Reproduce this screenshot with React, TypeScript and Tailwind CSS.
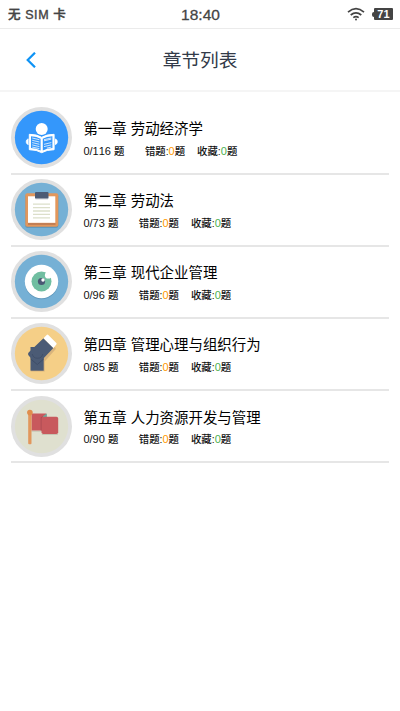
import React from "react";

function BookIcon() {
  return (
    <svg viewBox="0 0 61 61" className="block h-full w-full">
      <circle cx="30.5" cy="30.5" r="30.5" fill="#e0e0e0" />
      <circle cx="30.5" cy="30.5" r="26.700" fill="#3497fb" />
      <circle cx="30.7" cy="22" r="6" fill="#fff" />
      <path d="M17.500 32c-3 0-3 5.500 0 5.500M44 32c3 0 3 5.500 0 5.500" fill="#fff" stroke="#fff" strokeWidth=".8" />
      <path d="M18.300 27.300q7.500 0 12.400 3 4.900-3 12.400-3v15.400q-7.500 0-12.400 3-4.900-3-12.400-3z" fill="#fff" stroke="#fff" strokeWidth="1" />
      <path d="M20 29.200q6 .2 9.600 2.600v11.600q-4-2-9.600-2.300zM41.400 29.200q-6 .2-9.600 2.600v11.600q4-2 9.600-2.300z" fill="#3497fb" />
      <path d="M21.200 31l7.200 1.700M21.200 33.300l7.200 1.700M21.200 35.600l7.200 1.700M21.200 37.900l7.200 1.700M21.200 40.100l7.200 1.500M40.300 31l-7.300 1.700M40.300 32.100l-7.300 1.700M40.300 35.600l-7.300 1.700M40.300 37.900l-7.300 1.700M40.300 40.100l-4.500 1" stroke="#fff" strokeOpacity=".85" strokeWidth=".9" />
    </svg>
  );
}

function ClipboardIcon() {
  return (
    <svg viewBox="0 0 61 61" className="block h-full w-full">
      <circle cx="30.5" cy="30.5" r="30.5" fill="#e0e0e0" />
      <circle cx="30.5" cy="30.5" r="26.700" fill="#75b0d5" />
      <rect x="14.300" y="15.300" width="33" height="33.500" rx="2" fill="#5a92b5" />
      <rect x="14.300" y="14.300" width="33" height="33.500" rx="2" fill="#e2975c" />
      <path d="M17 45h27.500" stroke="#af7150" strokeWidth="1.200" />
      <rect x="17" y="17.300" width="27.300" height="26.500" fill="#fff" />
      <rect x="24" y="13" width="13.500" height="6.800" rx="1" fill="#4c5b75" />
      <path d="M24.500 20h12.500" stroke="#c9ccd2" strokeWidth=".8" />
      <path d="M22 25.200h17M22 28.600h17M22 32h17M22 35.400h17M22 38.800h17" stroke="#dcdfca" strokeWidth="1.300" />
    </svg>
  );
}

function EyeIcon() {
  return (
    <svg viewBox="0 0 61 61" className="block h-full w-full">
      <circle cx="30.5" cy="30.5" r="30.5" fill="#e0e0e0" />
      <circle cx="30.5" cy="30.5" r="26.700" fill="#75b0d5" />
      <circle cx="30.500" cy="31.500" r="16.700" fill="#5f98bc" />
      <circle cx="30.500" cy="30.500" r="16.700" fill="#fff" />
      <circle cx="30.500" cy="30.500" r="10" fill="#70bea1" />
      <circle cx="37.300" cy="24.200" r="3.400" fill="#fff" />
      <circle cx="30.500" cy="30.500" r="3.600" fill="#4a5874" />
      <circle cx="32" cy="29" r="1.700" fill="#fff" />
    </svg>
  );
}

function SwitchIcon() {
  return (
    <svg viewBox="0 0 61 61" className="block h-full w-full">
      <circle cx="30.5" cy="30.5" r="30.5" fill="#e0e0e0" />
      <circle cx="30.5" cy="30.5" r="26.700" fill="#f5cf87" />
      <path d="M33 33l11-9 .8 2L33.700 38.500v10H19.500z" fill="#d9b47c" />
      <path d="M19.500 24h13.200v23.700H19.500z" fill="#4b5b75" />
      <path d="M17.600 29.600L32.500 15.200l9.900 9.800L29.500 38.500q-3.500 2.500-7-.5l-4.900-5.600q-1.200-1.400 0-2.800z" fill="#4b5b75" />
      <path d="M32.500 15.200l3.200-3.200q.8-.8 1.600 0l8 8q.8.800 0 1.600L42.400 25z" fill="#fff" />
      <path d="M19.700 36l6.600 5.500 6.400-5.500" fill="none" stroke="#3f4e68" strokeWidth="1" />
      <path d="M21.300 31a5.300 5.300 0 0 0 10.400 0" fill="none" stroke="#41506a" strokeWidth="1" />
    </svg>
  );
}

function FlagIcon() {
  return (
    <svg viewBox="0 0 61 61" className="block h-full w-full">
      <circle cx="30.5" cy="30.5" r="30.5" fill="#e0e0e0" />
      <circle cx="30.5" cy="30.5" r="26.700" fill="#dfe0cf" />
      <path d="M20.500 35.200H31M30.800 38.500h16" stroke="#c5c5b3" strokeWidth="1" />
      <path d="M20.500 17.500h14.800v17H20.500z" fill="#c8595d" />
      <path d="M31 21l4.800-3.600V21z" fill="#68ac9e" />
      <path d="M29.700 21.500l2.200-1.500v14.500h-2.200z" fill="#a94b53" />
      <rect x="30.500" y="20.800" width="16.700" height="17.200" rx="1.800" fill="#c8595d" />
      <rect x="17.200" y="17" width="3.300" height="31.200" rx="1" fill="#e2975c" />
      <circle cx="18.900" cy="16.600" r="2.800" fill="#e08d4c" />
    </svg>
  );
}

const chapters = [
  { title: "第一章 劳动经济学", total: 116, Icon: BookIcon },
  { title: "第二章 劳动法", total: 73, Icon: ClipboardIcon },
  { title: "第三章 现代企业管理", total: 96, Icon: EyeIcon },
  { title: "第四章 管理心理与组织行为", total: 85, Icon: SwitchIcon },
  { title: "第五章 人力资源开发与管理", total: 90, Icon: FlagIcon },
];

function StatusBar() {
  return (
    <div className="grid h-[29px] grid-cols-3 items-center border-b border-[#ebebeb] pr-[7px] pl-2 text-[#444]">
      <span className="pt-[2px] text-[12.5px] font-medium leading-none tracking-[0.6px] [-webkit-text-stroke:0.4px_#444]">无 SIM 卡</span>
      <span className="pt-[2px] text-center text-[15.5px] leading-none [-webkit-text-stroke:0.3px_#444]">18:40</span>
      <div className="flex items-center justify-end gap-[7px]">
        <svg width="18" height="14" viewBox="0 0 18 14" fill="none" stroke="#444" strokeWidth="1.700">
          <path d="M1 5.100q8-6.800 16 0M3.700 8q5.300-4.400 10.600 0M6.300 10.600q2.700-2 5.400 0" />
          <circle cx="9" cy="12.500" r="1" fill="#444" stroke="none" />
        </svg>
        <div className="flex items-center">
          <span className="h-[5px] w-[2px] rounded-l-sm bg-[#444]" />
          <span className="flex h-3 w-[19px] items-center justify-center rounded-[1px] bg-[#444] text-[11px] font-bold leading-none text-white">71</span>
        </div>
      </div>
    </div>
  );
}

export default function App() {
  return (
    <div className="h-[711px] w-full overflow-hidden bg-white font-['Liberation_Sans','Noto_Sans_CJK_SC',sans-serif]">
      <StatusBar />
      <header className="grid h-[63px] grid-cols-[1fr_auto_1fr] items-center border-b-2 border-[#f5f5f5]">
        <button className="pl-[26px]" aria-label="返回">
          <svg width="10" height="16" viewBox="0 0 10 16" fill="none" stroke="#0e93f5" strokeWidth="2.200">
            <path d="M9 .700L1.700 8 9 15.300" />
          </svg>
        </button>
        <h1 className="pt-[3px] text-[18.7px] leading-none text-[#323a48]">章节列表</h1>
        <span />
      </header>
      <ul className="mx-[11px] pt-[11px]">
        {chapters.map(({ title, total, Icon }) => (
          <li key={title} className="flex h-[72.1px] items-start border-b-2 border-[#e6e6e6] pt-[4.2px]">
            <div className="h-[61px] w-[61px] shrink-0">
              <Icon />
            </div>
            <div className="ml-[11.4px] pt-[13px] whitespace-nowrap text-black">
              <h2 className="text-[14.45px] leading-[18px]">{title}</h2>
              <p className="mt-[5.500px] flex text-[10.4px] leading-[14px] text-[#111] [font-kerning:none]">
                <span className="mr-[20.5px]"><span className="text-[11px]">0/{total} </span><b className="font-medium">题</b></span>
                <span className="mr-3 font-medium">错题:<i className="text-[11px] font-normal not-italic text-[#ff9900]">0</i>题</span>
                <span className="font-medium">收藏:<i className="text-[11px] font-normal not-italic text-[#4caf50]">0</i>题</span>
              </p>
            </div>
          </li>
        ))}
      </ul>
    </div>
  );
}
